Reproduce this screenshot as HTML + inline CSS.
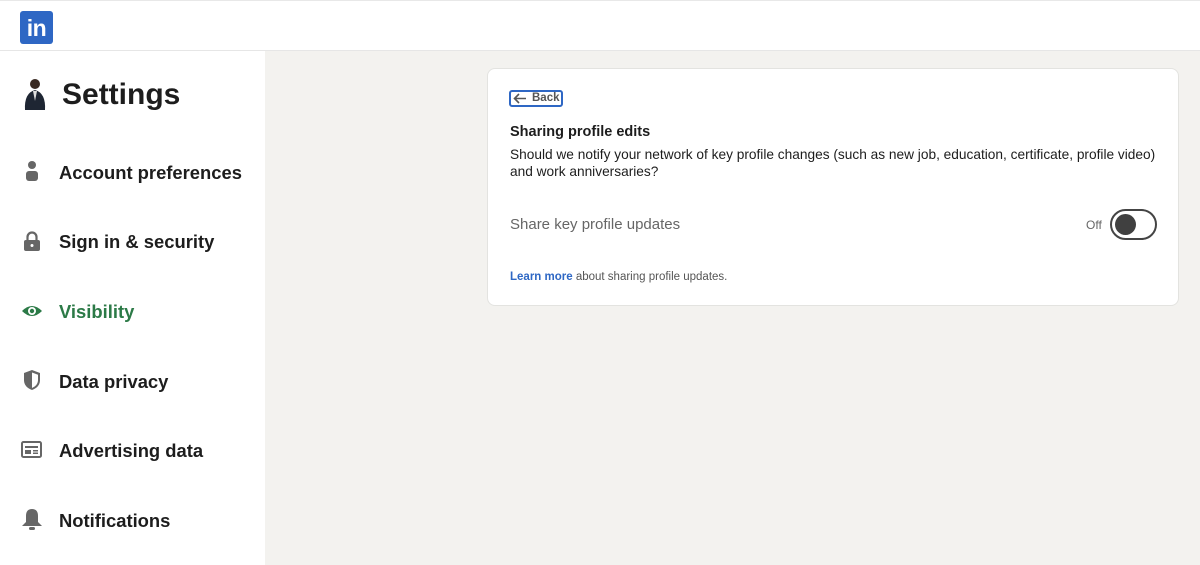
<!DOCTYPE html>
<html><head><style>
*{margin:0;padding:0;box-sizing:border-box}
body{width:1200px;height:565px;overflow:hidden;background:#f3f2ef;font-family:"Liberation Sans",sans-serif;position:relative;color:#1d1d1d}
.hdr{position:absolute;left:0;top:0;width:1200px;height:51px;background:#fff;border-top:1px solid #e8e8e8;border-bottom:1px solid #e6e6e6}
.logo{position:absolute;left:20px;top:10px;width:33px;height:33px;background:#2e67c4;border-radius:3px;color:#fff;font-weight:bold;font-size:23px;line-height:35px;text-align:center;letter-spacing:-0.5px}
.side{position:absolute;left:0;top:51px;width:265px;height:514px;background:#fff}
.title{position:absolute;left:62px;top:78px;font-size:30px;font-weight:bold}
.item{position:absolute;left:59px;font-size:18.4px;font-weight:bold;color:#1d1d1d}
.ic{position:absolute;left:21px}
.card{position:absolute;left:487px;top:68px;width:692px;height:238px;background:#fff;border-radius:8px;border:1px solid #e3e3e0}
</style></head><body>
<div class="hdr"><div class="logo">in</div></div>
<div class="side">
<svg style="position:absolute;left:23px;top:26px" width="24" height="34" viewBox="0 0 24 34"><circle cx="12" cy="7" r="5" fill="#3a2a22"/><path d="M2 33 Q1 16 12 13 Q23 16 22 33Z" fill="#1e2633"/><path d="M10 14 L12 24 L14 14Z" fill="#ddd"/></svg>
</div>
<div class="title">Settings</div>
<svg class="ic" style="top:160px" width="22" height="22" viewBox="0 0 22 22"><circle cx="11" cy="5" r="4" fill="#666"/><rect x="5" y="11" width="12" height="10" rx="3" fill="#666"/></svg>
<div class="item" style="top:162px">Account preferences</div>
<svg class="ic" style="top:230px" width="22" height="22" viewBox="0 0 22 22"><path d="M6.5 10V7a4.5 4.5 0 0 1 9 0v3" stroke="#666" stroke-width="2.2" fill="none"/><rect x="3" y="10" width="16" height="11" rx="2" fill="#666"/><circle cx="11" cy="15.5" r="1.5" fill="#fff"/></svg>
<div class="item" style="top:231px">Sign in &amp; security</div>
<svg class="ic" style="top:301px" width="22" height="20" viewBox="0 0 22 20"><path d="M1 10 Q11 0 21 10 Q11 20 1 10Z" fill="#2c7a47"/><circle cx="11" cy="10" r="4" fill="#fff"/><circle cx="11" cy="10" r="2.2" fill="#2c7a47"/></svg>
<div class="item" style="top:301px;color:#2c7a47">Visibility</div>
<svg class="ic" style="top:369px" width="22" height="22" viewBox="0 0 22 22"><path d="M11 1 L19 4 V11 Q19 18 11 21 Q3 18 3 11 V4Z" fill="#666"/><path d="M11 3.5 L17 5.8 V11 Q17 16.5 11 19Z" fill="#fff"/></svg>
<div class="item" style="top:371px">Data privacy</div>
<svg class="ic" style="top:441px" width="22" height="18" viewBox="0 0 22 18"><rect x="1" y="1" width="19" height="15" rx="1.5" fill="none" stroke="#666" stroke-width="2"/><rect x="4" y="5" width="13" height="2" fill="#666"/><rect x="4" y="9" width="6" height="4" fill="#666"/><rect x="12" y="9" width="5" height="1.5" fill="#666"/><rect x="12" y="11.5" width="5" height="1.5" fill="#666"/></svg>
<div class="item" style="top:440px">Advertising data</div>
<svg class="ic" style="top:508px" width="22" height="24" viewBox="0 0 22 24"><path d="M11 1 Q5 1 5 8 V14 L1 18 H21 L17 14 V8 Q17 1 11 1Z" fill="#666"/><rect x="8" y="19" width="6" height="3" rx="1.5" fill="#666"/></svg>
<div class="item" style="top:510px">Notifications</div>
<div class="card">
<div style="position:absolute;left:21px;top:21px;width:54px;height:17px;border:2px solid #2e67c4;border-radius:3px;font-size:11.5px;color:#555;font-weight:bold;line-height:13px;padding-left:21px;white-space:nowrap">Back
<svg style="position:absolute;left:2px;top:1px" width="14" height="11" viewBox="0 0 14 11"><path d="M13 5.5H2M6 1L1.5 5.5L6 10" stroke="#555" stroke-width="1.6" fill="none"/></svg></div>
<div style="position:absolute;left:22px;top:55px;font-size:14.5px;font-weight:bold">Sharing profile edits</div>
<div style="position:absolute;left:22px;top:77px;font-size:13.7px;line-height:17px;width:655px">Should we notify your network of key profile changes (such as new job, education, certificate, profile video) and work anniversaries?</div>
<div style="position:absolute;left:22px;top:147px;font-size:15px;color:#666">Share key profile updates</div>
<div style="position:absolute;left:598px;top:149px;font-size:12px;color:#666">Off</div>
<div style="position:absolute;left:622px;top:140px;width:47px;height:31px;border:2px solid #444;border-radius:16px"><div style="position:absolute;left:3px;top:3px;width:21px;height:21px;border-radius:50%;background:#404040"></div></div>
<div style="position:absolute;left:22px;top:202px;font-size:11.5px;color:#555"><b style="color:#2e67c4">Learn more</b> about sharing profile updates.</div>
</div>
</body></html>
